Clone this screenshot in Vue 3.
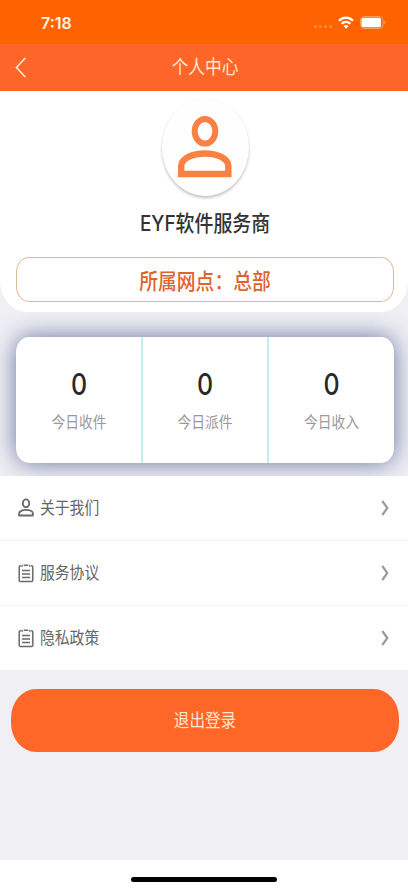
<script setup>
const stats = [
  { label: '今日收件', value: 0 },
  { label: '今日派件', value: 0 },
  { label: '今日收入', value: 0 },
]
const menu = [
  { label: '关于我们', icon: 'user' },
  { label: '服务协议', icon: 'doc' },
  { label: '隐私政策', icon: 'doc' },
]
</script>

<template>
  <div class="page">
    <div class="status">
      <span class="time">7:18</span>
      <div class="signals">
        <span class="dots"><i v-for="n in 4" :key="n"></i></span>
        <svg class="wifi" width="16" height="13" viewBox="0 0 16 13" fill="none" stroke="#fff" stroke-width="2.3">
          <path d="M1 4.700C4.800 0.700 11.200 0.700 15 4.700" />
          <path d="M3.600 7.800C6 5.300 10 5.300 12.400 7.800" />
          <path d="M5.500 9.900C7 8.600 9 8.600 10.500 9.900L8 12.700Z" fill="#fff" stroke="none" />
        </svg>
        <svg class="battery" width="26" height="13" viewBox="0 0 26 13">
          <rect x="0.5" y="0.5" width="22.5" height="12" rx="3.5" fill="none" stroke="#ff9d5c" />
          <rect x="1.500" y="1.700" width="19.500" height="9.600" rx="1.800" fill="#fff" />
          <path d="M24.2 4.3C25.8 5 25.8 8 24.2 8.7Z" fill="#ff9d5c" />
        </svg>
      </div>
    </div>

    <header class="nav">
      <svg class="back" width="12" height="21" viewBox="0 0 12 21" fill="none" stroke="#ffe6cf" stroke-width="1.7">
        <path d="M10.3 1L1.500 10.500L10.300 20" />
      </svg>
      <h1 class="tall">个人中心</h1>
      <span class="nav-end"></span>
    </header>

    <section class="profile">
      <div class="avatar">
        <svg width="54" height="64" viewBox="0 0 54 64" fill="none" stroke="#fa8044">
          <ellipse cx="27" cy="16.300" rx="10.300" ry="12.300" stroke-width="6" />
          <path d="M3.200 59V51C3.200 43.500 14.500 38.500 27 38.500S50.300 43.500 50.300 51V59Z" stroke-width="6.400" />
        </svg>
      </div>
      <div class="name"><span class="tall">EYF软件服务商</span></div>
      <div class="branch"><span class="tall">所属网点：总部</span></div>
    </section>

    <section class="stats">
      <div class="card">
        <div v-for="s in stats" :key="s.label" class="stat">
          <span class="num">{{ s.value }}</span>
          <span class="label tall">{{ s.label }}</span>
        </div>
      </div>
    </section>

    <ul class="menu">
      <li v-for="m in menu" :key="m.label">
        <svg v-if="m.icon === 'user'" class="icon" width="16" height="20" viewBox="0 0 16 20" fill="none" stroke="#6a6a6a" stroke-width="1.900">
          <ellipse cx="8" cy="5.300" rx="3.200" ry="3.900" />
          <path d="M1.100 17.500V15.500C1.100 13.300 4.200 11.900 8 11.900S14.900 13.300 14.900 15.500V17.500Z" stroke-linejoin="round" />
        </svg>
        <svg v-else class="icon" width="16" height="20" viewBox="0 0 16 20" fill="none" stroke="#6a6a6a" stroke-width="1.500">
          <path d="M2.900 2.700H2.400Q1.200 2.700 1.200 4.100V17Q1.200 18.500 2.500 18.500H13.500Q14.800 18.500 14.800 17V4.100Q14.800 2.700 13.600 2.700H13.100M5.700 2.200H10.300" />
          <path d="M4.100 1.800V4M11.900 1.800V4" stroke-width="1.200" />
          <path d="M4 7.500H12M4 11H12M4 14.500H12" />
        </svg>
        <span class="text tall">{{ m.label }}</span>
        <svg class="arrow" width="8" height="16" viewBox="0 0 8 16" fill="none" stroke="#9b9b9b" stroke-width="2.200">
          <path d="M1.300 1L6.300 8L1.300 15" />
        </svg>
      </li>
    </ul>

    <div class="actions">
      <button type="button"><span class="tall">退出登录</span></button>
    </div>

    <footer class="home"><span></span></footer>
  </div>
</template>

<style>
body {
  margin: 0;
}
</style>

<style scoped>
.page {
  display: flex;
  flex-direction: column;
  width: 100%;
  height: 890px;
  overflow: hidden;
  background: #efeff4;
  font-family: "Noto Sans CJK SC", sans-serif;
}
.tall {
  display: inline-block;
  transform: translateY(-0.5px) scaleY(1.13);
}
.status {
  display: flex;
  flex: none;
  justify-content: space-between;
  box-sizing: border-box;
  height: 44px;
  padding: 0 22px 0 41px;
  background: #ff6200;
}
.time {
  color: #fff4e8;
  font: 600 16px/46px Inter, sans-serif;
}
.signals {
  display: flex;
  align-items: center;
  height: 45px;
}
.dots {
  display: flex;
  gap: 2px;
  margin: 8px 6px 0 0;
}
.dots i {
  width: 3px;
  height: 3px;
  border-radius: 50%;
  background: #ff8a42;
}
.battery {
  margin-left: 6px;
}
.nav {
  display: flex;
  flex: none;
  align-items: center;
  justify-content: space-between;
  box-sizing: border-box;
  height: 47px;
  padding: 0 15px;
  background: #fd6628;
}
.nav h1 {
  margin: 0;
  color: #ffe6cf;
  font-size: 16.7px;
  font-weight: 400;
  line-height: 45px;
}
.nav-end {
  width: 10px;
}
.profile {
  position: relative;
  z-index: 1;
  display: flex;
  flex: none;
  flex-direction: column;
  align-items: center;
  box-sizing: border-box;
  height: 221px;
  padding: 8px 14px 0 16px;
  border-radius: 0 0 27px 27px / 0 0 31px 31px;
  background: #fff;
}
.avatar {
  display: flex;
  align-items: center;
  justify-content: center;
  box-sizing: border-box;
  width: 87px;
  height: 97px;
  padding-bottom: 1px;
  border-radius: 50%;
  background: #fefefe;
  box-shadow: 0 2px 3px rgba(0, 0, 0, 0.24);
}
.name {
  height: 49px;
  margin-top: 4px;
  color: #333;
  font-family: Inter, "Noto Sans CJK SC", sans-serif;
  font-size: 18.9px;
  font-weight: 500;
  line-height: 50px;
}
.branch {
  box-sizing: border-box;
  width: 100%;
  height: 45px;
  margin-top: 8px;
  border: 1px solid #d9bd98;
  border-radius: 13px / 15px;
  color: #e2622c;
  font-size: 18.8px;
  font-weight: 500;
  line-height: 43px;
  text-align: center;
}
.stats {
  flex: none;
  box-sizing: border-box;
  height: 164px;
  padding: 25px 14px 0 16px;
  overflow: hidden;
}
.card {
  display: grid;
  grid-template-columns: repeat(3, 1fr);
  height: 126px;
  border-radius: 13px / 15px;
  background: #fff;
  box-shadow: 0 0 24px rgba(58, 73, 130, 0.75);
}
.stat {
  display: flex;
  flex-direction: column;
  align-items: center;
  padding-top: 27px;
}
.stat + .stat {
  margin-left: -1px;
  border-left: 2px solid #c2ebf2;
}
.stat:nth-child(2) {
  padding-right: 1px;
}
.num {
  color: #292929;
  font-family: Inter, sans-serif;
  font-size: 25px;
  font-weight: 500;
  line-height: 40px;
  transform: translateY(0.5px) scaleY(1.2);
}
.label {
  margin-top: 8px;
  color: #999;
  font-size: 13.8px;
  line-height: 20px;
}
.menu {
  flex: none;
  margin: 0;
  padding: 0;
  list-style: none;
  background: #fff;
}
.menu li {
  display: flex;
  align-items: center;
  box-sizing: border-box;
  height: 65px;
  padding: 0 19px 0 18px;
  border-bottom: 1px solid #f4f4f4;
}
.menu li:last-child {
  height: 64px;
  border-bottom: 0;
}
.text {
  flex: 1;
  margin-left: 6px;
  color: #666;
  font-size: 14.8px;
  line-height: 64px;
}
.actions {
  flex: 1;
  padding: 19px 9px 0 11px;
}
.actions button {
  display: block;
  width: 100%;
  height: 63px;
  padding: 0;
  border: 0;
  border-radius: 25px / 29px;
  background: #ff6728;
  color: #ffe6cf;
  font-family: inherit;
  font-size: 15.6px;
  line-height: 63px;
}
.home {
  display: flex;
  flex: none;
  justify-content: center;
  box-sizing: border-box;
  height: 30px;
  padding-top: 17px;
  background: #fff;
}
.home span {
  width: 146px;
  height: 5px;
  border-radius: 3px;
  background: #000;
}
</style>
